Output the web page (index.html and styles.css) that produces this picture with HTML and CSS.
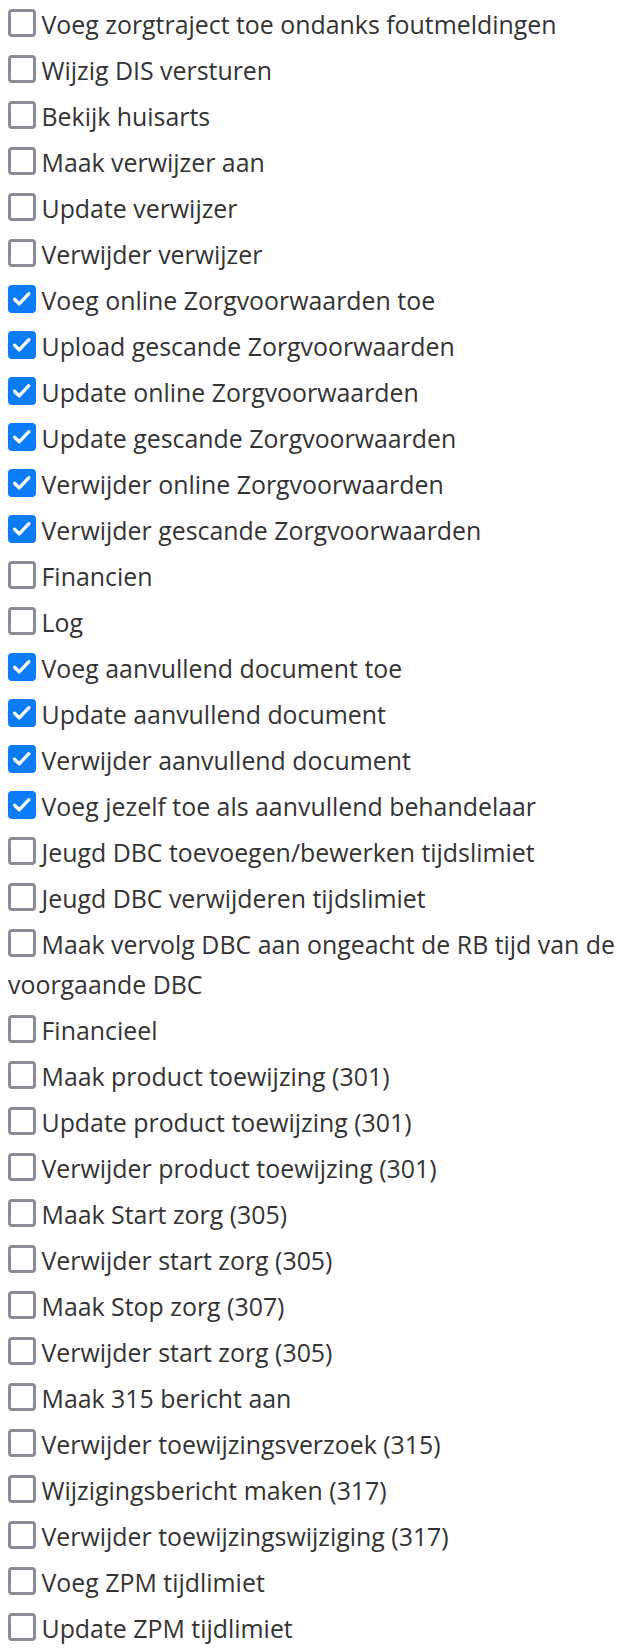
FILE: index.html
```html
<!DOCTYPE html>
<html lang="nl">
<head>
<meta charset="utf-8">
<title>Rechten</title>
<link rel="stylesheet" href="styles.css">
</head>
<body>
<div class="list">
  <label class="item"><span class="box"></span>Voeg zorgtraject toe ondanks foutmeldingen</label>
  <label class="item"><span class="box"></span>Wijzig DIS versturen</label>
  <label class="item"><span class="box"></span>Bekijk huisarts</label>
  <label class="item"><span class="box"></span>Maak verwijzer aan</label>
  <label class="item"><span class="box"></span>Update verwijzer</label>
  <label class="item"><span class="box"></span>Verwijder verwijzer</label>
  <label class="item"><span class="box checked"><svg viewBox="0 0 27 27"><polyline points="6.5,14 11,18.5 20.5,8.5"/></svg></span>Voeg online Zorgvoorwaarden toe</label>
  <label class="item"><span class="box checked"><svg viewBox="0 0 27 27"><polyline points="6.5,14 11,18.5 20.5,8.5"/></svg></span>Upload gescande Zorgvoorwaarden</label>
  <label class="item"><span class="box checked"><svg viewBox="0 0 27 27"><polyline points="6.5,14 11,18.5 20.5,8.5"/></svg></span>Update online Zorgvoorwaarden</label>
  <label class="item"><span class="box checked"><svg viewBox="0 0 27 27"><polyline points="6.5,14 11,18.5 20.5,8.5"/></svg></span>Update gescande Zorgvoorwaarden</label>
  <label class="item"><span class="box checked"><svg viewBox="0 0 27 27"><polyline points="6.5,14 11,18.5 20.5,8.5"/></svg></span>Verwijder online Zorgvoorwaarden</label>
  <label class="item"><span class="box checked"><svg viewBox="0 0 27 27"><polyline points="6.5,14 11,18.5 20.5,8.5"/></svg></span>Verwijder gescande Zorgvoorwaarden</label>
  <label class="item"><span class="box"></span>Financien</label>
  <label class="item"><span class="box"></span>Log</label>
  <label class="item"><span class="box checked"><svg viewBox="0 0 27 27"><polyline points="6.5,14 11,18.5 20.5,8.5"/></svg></span>Voeg aanvullend document toe</label>
  <label class="item"><span class="box checked"><svg viewBox="0 0 27 27"><polyline points="6.5,14 11,18.5 20.5,8.5"/></svg></span>Update aanvullend document</label>
  <label class="item"><span class="box checked"><svg viewBox="0 0 27 27"><polyline points="6.5,14 11,18.5 20.5,8.5"/></svg></span>Verwijder aanvullend document</label>
  <label class="item"><span class="box checked"><svg viewBox="0 0 27 27"><polyline points="6.5,14 11,18.5 20.5,8.5"/></svg></span>Voeg jezelf toe als aanvullend behandelaar</label>
  <label class="item"><span class="box"></span>Jeugd DBC toevoegen/bewerken tijdslimiet</label>
  <label class="item"><span class="box"></span>Jeugd DBC verwijderen tijdslimiet</label>
  <label class="item"><span class="box"></span>Maak vervolg DBC aan ongeacht de RB tijd van de voorgaande DBC</label>
  <label class="item"><span class="box"></span>Financieel</label>
  <label class="item"><span class="box"></span>Maak product toewijzing (301)</label>
  <label class="item"><span class="box"></span>Update product toewijzing (301)</label>
  <label class="item"><span class="box"></span>Verwijder product toewijzing (301)</label>
  <label class="item"><span class="box"></span>Maak Start zorg (305)</label>
  <label class="item"><span class="box"></span>Verwijder start zorg (305)</label>
  <label class="item"><span class="box"></span>Maak Stop zorg (307)</label>
  <label class="item"><span class="box"></span>Verwijder start zorg (305)</label>
  <label class="item"><span class="box"></span>Maak 315 bericht aan</label>
  <label class="item"><span class="box"></span>Verwijder toewijzingsverzoek (315)</label>
  <label class="item"><span class="box"></span>Wijzigingsbericht maken (317)</label>
  <label class="item"><span class="box"></span>Verwijder toewijzingswijziging (317)</label>
  <label class="item"><span class="box"></span>Voeg ZPM tijdlimiet</label>
  <label class="item"><span class="box"></span>Update ZPM tijdlimiet</label>
</div>
</body>
</html>
```
FILE: styles.css
```css
html, body {
  margin: 0;
  padding: 0;
  background: #ffffff;
}

body {
  padding: 0 8px;
  font-family: "Open Sans", "Noto Sans", sans-serif;
  font-size: 24.9px;
  color: #333333;
}

.list {
  display: flex;
  flex-direction: column;
}

.item {
  display: block;
  line-height: 40px;
  padding: 3.5px 0 2.5px;
}

.box {
  display: inline-block;
  box-sizing: border-box;
  width: 27.5px;
  height: 27.5px;
  margin-right: 6px;
  border: 3px solid #8e8b99;
  border-radius: 4px;
  vertical-align: -3px;
  background: #ffffff;
}

.box.checked {
  border: none;
  background: #0d7cfb;
}

.box svg {
  display: block;
  width: 27.5px;
  height: 27.5px;
}

.box polyline {
  fill: none;
  stroke: #ffffff;
  stroke-width: 3.2;
  stroke-linecap: round;
  stroke-linejoin: round;
}
```
